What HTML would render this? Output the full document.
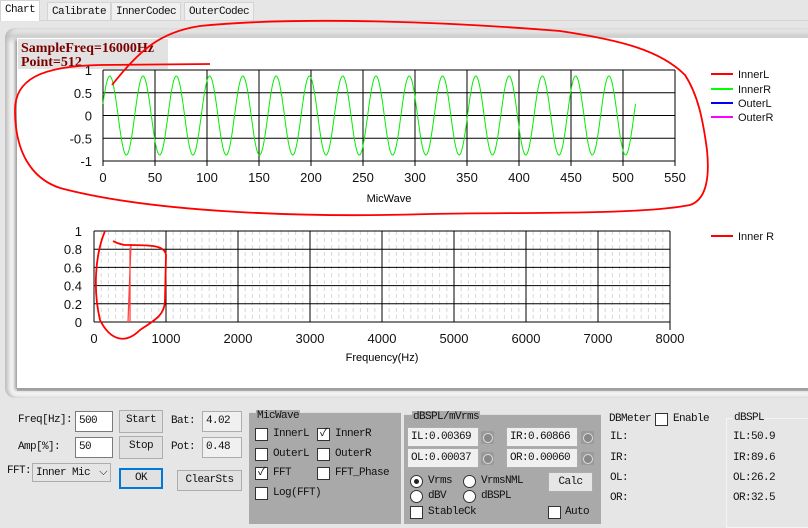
<!DOCTYPE html>
<html><head><meta charset="utf-8"><style>
*{box-sizing:border-box}
body{margin:0;width:808px;height:522px;background:#e6e6e6;position:relative;overflow:hidden;font-family:"Liberation Mono","Noto Sans CJK SC",monospace;font-size:11px;letter-spacing:-0.6px;color:#111}
.a{position:absolute;white-space:nowrap}
.tab{position:absolute;top:2px;height:18px;border:1px solid #d4d4d4;border-bottom:none;background:#f0f0f0;padding:2px 4px;line-height:14px}
.inp{position:absolute;background:#fff;border:1px solid #7a7a7a;padding:1px 3px;line-height:16px}
.ro{position:absolute;background:#f0f0f0;border:1px solid #adadad;padding:1px 3px;line-height:16px}
.btn{position:absolute;background:#e1e1e1;border:1px solid #adadad;text-align:center;line-height:18px}
.cb{position:absolute;width:13px;height:13px;background:#fff;border:1px solid #333}
.rd{position:absolute;width:13px;height:13px;border-radius:50%;background:#fff;border:1px solid #333}
.knob{position:absolute;width:13px;height:13px;background:#9a9a9a;border-radius:2px}
.knob:after{content:"";position:absolute;left:2px;top:2px;width:8px;height:8px;border-radius:50%;border:1px solid #ddd;background:#888}
svg text{letter-spacing:0}
</style></head><body>
<div class="tab" style="left:0;top:0;height:21px;background:#fff;z-index:2">Chart</div>
<div class="tab" style="left:47px">Calibrate</div>
<div class="tab" style="left:111px">InnerCodec</div>
<div class="tab" style="left:184px">OuterCodec</div>
<div class="a" style="left:0;top:20px;width:808px;height:1px;background:#d4d4d4"></div>

<div class="a" style="left:5px;top:28px;width:810px;height:370px;border-radius:10px;background:linear-gradient(#f4f4f4,#cfcfcf 8px,#f4f4f4 16px);box-shadow:inset 3px 0 4px #bbb"></div>
<div class="a" style="left:17px;top:38px;width:800px;height:350px;background:#fff;box-shadow:-2px 2px 3px #999, 0 3px 0 #b4b4b4"></div>

<svg class="a" style="left:0;top:0" width="808" height="400" font-family="Liberation Sans,sans-serif">
<rect x="18" y="39" width="150" height="30" fill="#e2e2e2"/>
<text x="21" y="52" font-family="Liberation Serif,serif" font-weight="bold" font-size="14" letter-spacing="0.3" fill="#7a0000">SampleFreq=16000Hz</text>
<text x="21" y="66" font-family="Liberation Serif,serif" font-weight="bold" font-size="14" letter-spacing="0.3" fill="#7a0000">Point=512</text>
<g id="g1" stroke="#000" stroke-width="1"></g>
<g id="g2"></g>
<g font-size="13" fill="#111" id="lbl"></g>
<text x="389" y="202" font-size="11" text-anchor="middle">MicWave</text>
<text x="382" y="361" font-size="11" text-anchor="middle">Frequency(Hz)</text>
<g font-size="11" fill="#111">
<line x1="711" y1="74" x2="733" y2="74" stroke="#f00" stroke-width="2"/><text x="738" y="78">InnerL</text>
<line x1="711" y1="89" x2="733" y2="89" stroke="#0f0" stroke-width="2"/><text x="738" y="93">InnerR</text>
<line x1="711" y1="103" x2="733" y2="103" stroke="#00f" stroke-width="2"/><text x="738" y="107">OuterL</text>
<line x1="711" y1="117" x2="733" y2="117" stroke="#f0f" stroke-width="2"/><text x="738" y="121">OuterR</text>
<line x1="711" y1="236" x2="733" y2="236" stroke="#f00" stroke-width="2"/><text x="738" y="240">Inner R</text>
</g>
<path id="sine" fill="none" stroke="#0e0" stroke-width="1"/>
<path d="M130,322 L130,248 M128,322 L131,244" stroke="#f44" stroke-width="1.3" fill="none"/>
<g fill="none" stroke="#f00" stroke-width="1.8">
<path d="M112,85 C140,50 160,32 200,26 C300,16 450,22 560,31 C620,40 660,50 685,75 C698,95 703,120 707,150 C710,180 705,200 690,205 C640,215 520,212 430,214 C300,218 150,212 60,188 C30,178 15,150 15,110 C15,80 40,66 100,65 L210,64"/>
<path d="M105,231 C95,255 93,290 100,320 C110,340 125,345 140,330 C155,320 165,315 165,300 L166,255 C165,245 150,245 125,245 C118,244 115,242 113,241"/>
<path d="M495,456 C490,440 495,425 512,410 C530,408 570,410 595,425 C612,440 605,460 585,462 C560,465 525,460 500,455"/>
</g>
</svg>

<div class="a" style="left:18px;top:414px">Freq[Hz]:</div>
<div class="inp" style="left:75px;top:411px;width:38px;height:21px">500</div>
<div class="a" style="left:18px;top:441px">Amp[%]:</div>
<div class="inp" style="left:75px;top:437px;width:38px;height:21px">50</div>
<div class="a" style="left:7px;top:465px">FFT:</div>
<div class="ro" style="left:32px;top:463px;width:79px;height:19px;background:#e5e5e5">Inner Mic <span style="float:right">⌵</span></div>
<div class="btn" style="left:119px;top:410px;width:44px;height:23px">Start</div>
<div class="btn" style="left:119px;top:436px;width:44px;height:23px">Stop</div>
<div class="btn" style="left:119px;top:468px;width:44px;height:21px;border:2px solid #0078d7;line-height:16px">OK</div>
<div class="btn" style="left:177px;top:470px;width:65px;height:21px">ClearSts</div>
<div class="a" style="left:171px;top:415px">Bat:</div>
<div class="ro" style="left:202px;top:411px;width:40px;height:21px">4.02</div>
<div class="a" style="left:171px;top:441px">Pot:</div>
<div class="ro" style="left:202px;top:437px;width:40px;height:21px">0.48</div>

<div class="a" style="left:249px;top:412px;width:152px;height:112px;background:#a9a9a9;border-top:1px solid #ddd"></div>
<div class="a" style="left:256px;top:410px;background:#a9a9a9;padding:0 1px">MicWave</div>
<div class="cb" style="left:255px;top:428px"></div><div class="a" style="left:273px;top:428px">InnerL</div>
<div class="cb" style="left:317px;top:428px;font-size:11px;line-height:11px;text-align:center">✓</div><div class="a" style="left:335px;top:428px">InnerR</div>
<div class="cb" style="left:255px;top:448px"></div><div class="a" style="left:273px;top:448px">OuterL</div>
<div class="cb" style="left:317px;top:448px"></div><div class="a" style="left:335px;top:448px">OuterR</div>
<div class="cb" style="left:255px;top:467px;font-size:11px;line-height:11px;text-align:center">✓</div><div class="a" style="left:273px;top:467px">FFT</div>
<div class="cb" style="left:317px;top:467px"></div><div class="a" style="left:335px;top:467px">FFT_Phase</div>
<div class="cb" style="left:255px;top:487px"></div><div class="a" style="left:273px;top:487px">Log(FFT)</div>

<div class="a" style="left:404px;top:414px;width:197px;height:110px;background:#a9a9a9;border-top:1px solid #ddd"></div>
<div class="a" style="left:412px;top:411px;background:#a9a9a9;padding:0 1px">dBSPL/mVrms</div>
<div class="ro" style="left:407px;top:427px;width:72px;height:20px">IL:0.00369</div>
<div class="knob" style="left:481px;top:431px"></div>
<div class="ro" style="left:506px;top:427px;width:72px;height:20px">IR:0.60866</div>
<div class="knob" style="left:581px;top:431px"></div>
<div class="ro" style="left:407px;top:448px;width:72px;height:20px">OL:0.00037</div>
<div class="knob" style="left:481px;top:452px"></div>
<div class="ro" style="left:506px;top:448px;width:72px;height:20px">OR:0.00060</div>
<div class="knob" style="left:581px;top:452px"></div>
<div class="rd" style="left:410px;top:475px"><div style="position:absolute;left:3px;top:3px;width:5px;height:5px;border-radius:50%;background:#222"></div></div><div class="a" style="left:428px;top:475px">Vrms</div>
<div class="rd" style="left:463px;top:475px"></div><div class="a" style="left:481px;top:475px">VrmsNML</div>
<div class="rd" style="left:410px;top:490px"></div><div class="a" style="left:428px;top:490px">dBV</div>
<div class="rd" style="left:463px;top:490px"></div><div class="a" style="left:481px;top:490px">dBSPL</div>
<div class="btn" style="left:548px;top:472px;width:45px;height:20px;background:#e6e6e6">Calc</div>
<div class="cb" style="left:410px;top:506px"></div><div class="a" style="left:428px;top:506px">StableCk</div>
<div class="cb" style="left:548px;top:506px"></div><div class="a" style="left:565px;top:506px">Auto</div>

<div class="a" style="left:609px;top:413px">DBMeter</div>
<div class="cb" style="left:655px;top:413px"></div><div class="a" style="left:673px;top:413px">Enable</div>
<div class="a" style="left:610px;top:431px">IL:</div>
<div class="a" style="left:610px;top:452px">IR:</div>
<div class="a" style="left:610px;top:472px">OL:</div>
<div class="a" style="left:610px;top:492px">OR:</div>
<div class="a" style="left:726px;top:418px;width:90px;height:110px;border:1px solid #f4f4f4"></div>
<div class="a" style="left:733px;top:412px;background:#e6e6e6;padding:0 1px">dBSPL</div>
<div class="a" style="left:733px;top:431px">IL:50.9</div>
<div class="a" style="left:733px;top:452px">IR:89.6</div>
<div class="a" style="left:733px;top:472px">OL:26.2</div>
<div class="a" style="left:733px;top:492px">OR:32.5</div>

<script>
var NS="http://www.w3.org/2000/svg";
function el(p,t,a,tx){var e=document.createElementNS(NS,t);for(var k in a)e.setAttribute(k,a[k]);if(tx!=null)e.textContent=tx;p.appendChild(e);return e;}
var g1=document.getElementById('g1'),g2=document.getElementById('g2'),lb=document.getElementById('lbl');
var x0=103,x1=675,yT=70,yB=161;
for(var i=0;i<=11;i++){var x=x0+(x1-x0)*i/11;el(g1,'line',{x1:x,y1:yT,x2:x,y2:yB+5});el(lb,'text',{x:x,y:182,'text-anchor':'middle'},String(i*50));}
var yl=["1","0.5","0","-0.5","-1"];
for(var j=0;j<5;j++){var y=yT+(yB-yT)*j/4;el(g1,'line',{x1:x0,y1:y,x2:x1,y2:y});el(lb,'text',{x:92,y:y+5,'text-anchor':'end'},yl[j]);}
var d="";for(var n=0;n<=512;n++){var x=x0+n*(x1-x0)/550;var y=115.5-Math.sin(2*Math.PI*n/32+0.3)*0.87*45.5;d+=(n?"L":"M")+x.toFixed(1)+","+y.toFixed(1);}
document.getElementById('sine').setAttribute('d',d);
var X0=94,X1=670,T=231,B=322;
for(var i=0;i<80;i++){if(i%10==0)continue;var x=X0+(X1-X0)*i/80;el(g2,'line',{x1:x,y1:T,x2:x,y2:B,stroke:'#d8d8d8','stroke-dasharray':'4,3'});}
for(var i=0;i<=8;i++){var x=X0+(X1-X0)*i/8;el(g2,'line',{x1:x,y1:T,x2:x,y2:B,stroke:'#000'});el(lb,'text',{x:x,y:343,'text-anchor':'middle'},String(i*1000));}
el(g2,'line',{x1:X1,y1:B,x2:X1,y2:B+8,stroke:'#000'});
var yl2=["1","0.8","0.6","0.4","0.2","0"];
for(var j=0;j<6;j++){var y=T+(B-T)*j/5;el(g2,'line',{x1:X0,y1:y,x2:X1,y2:y,stroke:'#000'});el(lb,'text',{x:82,y:y+5,'text-anchor':'end'},yl2[j]);}
</script>
</body></html>
